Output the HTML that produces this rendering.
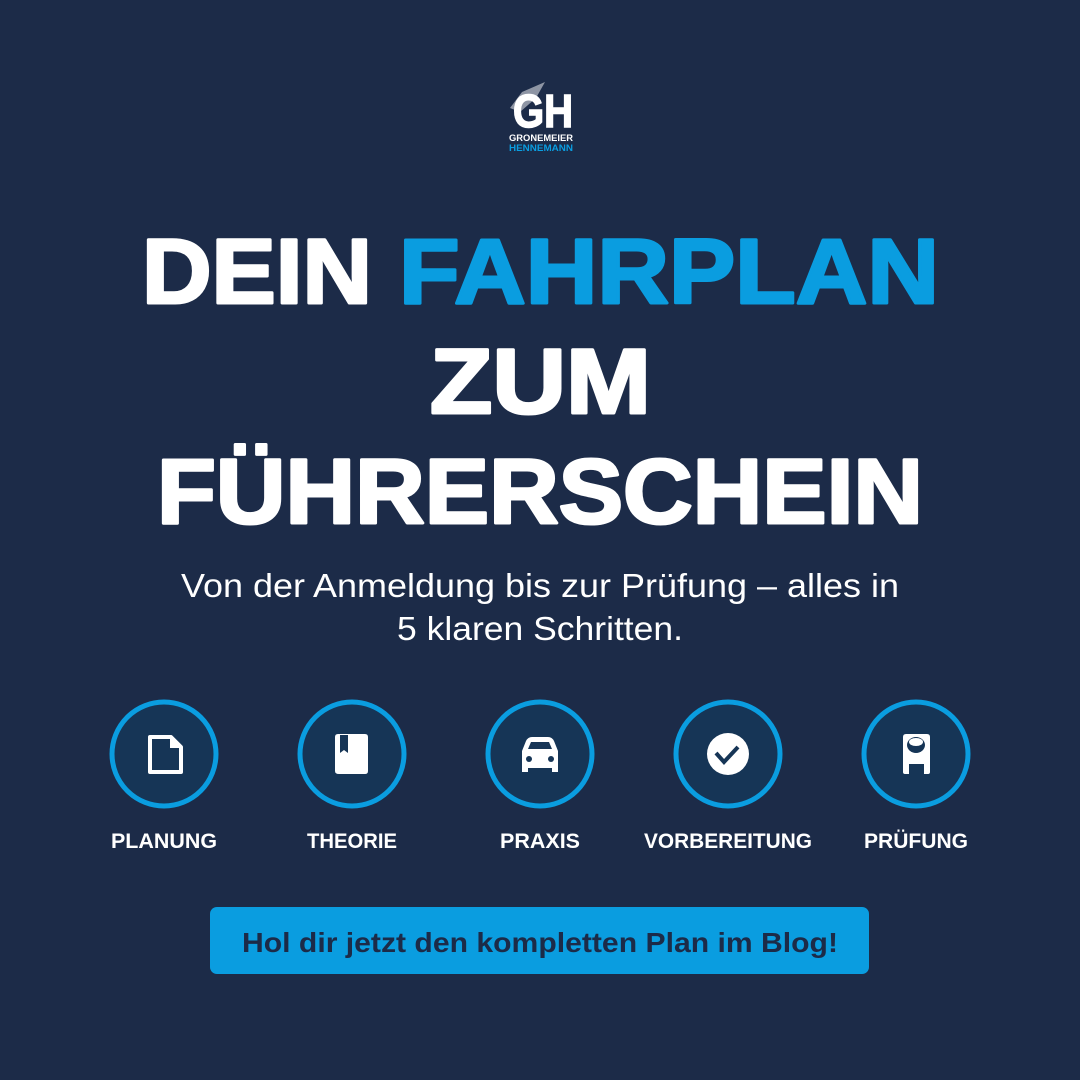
<!DOCTYPE html>
<html><head><meta charset="utf-8"><style>
html,body{margin:0;padding:0;background:#1c2b48;}
svg{display:block}
</style></head><body>
<svg width="1080" height="1080" viewBox="0 0 1080 1080" xmlns="http://www.w3.org/2000/svg">
<rect width="1080" height="1080" fill="#1c2b48"/>
<!-- logo -->
<g>
  <path d="M510 108 L522 92 L545 82 L536 98 L520 112 Z" fill="#ffffff" opacity="0.5"/>
  <text x="543" y="127" font-family="Liberation Sans, sans-serif" font-weight="700" font-size="46" fill="#fff" text-anchor="middle" textLength="60" lengthAdjust="spacingAndGlyphs" stroke="#fff" stroke-width="1.5">GH</text>
  <text x="541" y="141" font-family="Liberation Sans, sans-serif" font-weight="700" font-size="9" fill="#fff" text-anchor="middle" textLength="64" lengthAdjust="spacingAndGlyphs">GRONEMEIER</text>
  <text x="541" y="151" font-family="Liberation Sans, sans-serif" font-weight="700" font-size="9" fill="#0a9de0" text-anchor="middle" textLength="64" lengthAdjust="spacingAndGlyphs">HENNEMANN</text>
</g>
<!-- headline -->
<g font-family="Liberation Sans, sans-serif" font-weight="700" font-size="92" stroke-width="3" stroke-linejoin="round">
  <text x="142" y="303" fill="#fff" stroke="#fff" textLength="230" lengthAdjust="spacingAndGlyphs">DEIN</text>
  <text x="399" y="303" fill="#0a9de0" stroke="#0a9de0" textLength="540" lengthAdjust="spacingAndGlyphs">FAHRPLAN</text>
  <text x="430" y="413" fill="#fff" stroke="#fff" textLength="221" lengthAdjust="spacingAndGlyphs">ZUM</text>
  <text x="157" y="523" fill="#fff" stroke="#fff" textLength="766" lengthAdjust="spacingAndGlyphs">FÜHRERSCHEIN</text>
</g>
<!-- subtitle -->
<g font-family="Liberation Sans, sans-serif" font-size="33" fill="#fff">
  <text x="181" y="597" textLength="718" lengthAdjust="spacingAndGlyphs">Von der Anmeldung bis zur Prüfung – alles in</text>
  <text x="397" y="640" textLength="286" lengthAdjust="spacingAndGlyphs">5 klaren Schritten.</text>
</g>
<!-- circles -->
<g fill="#163556" stroke="#0a9de0" stroke-width="5">
  <circle cx="164" cy="754" r="52"/>
  <circle cx="352" cy="754" r="52"/>
  <circle cx="540" cy="754" r="52"/>
  <circle cx="728" cy="754" r="52"/>
  <circle cx="916" cy="754" r="52"/>
</g>
<!-- icons -->
<path d="M150 737 H171 L181 747 V772 H150 Z" fill="none" stroke="#fff" stroke-width="4" stroke-linejoin="round"/>
<path d="M170 737 V748 H181" fill="#fff"/>
<path d="M337 734 H365 Q368 734 368 737 V771 Q368 774 365 774 H339 Q335 774 335 771 V737 Q335 734 338 734 Z" fill="#fff"/>
<path d="M340 735 V753 L344 750 L348 753 V735 Z" fill="#163556"/>
<path d="M526 741 Q528 737 532 737 H548 Q552 737 554 741 L558 751 V772 H552 V768 H528 V772 H522 V751 Z" fill="#fff"/>
<path d="M528 749 L531 742 H549 L552 749 Z" fill="#163556"/>
<circle cx="529" cy="759" r="3" fill="#163556"/><circle cx="551" cy="759" r="3" fill="#163556"/>
<circle cx="728" cy="754" r="21" fill="#fff"/>
<path d="M716 753 L724 762 L738 747" fill="none" stroke="#163556" stroke-width="4"/>
<path d="M903 737 Q903 734 906 734 H927 Q930 734 930 737 V772 Q930 774 928 774 H924 V764 H909 V774 H905 Q903 774 903 772 Z" fill="#fff"/>
<ellipse cx="916" cy="745" rx="9" ry="8" fill="#163556"/>
<ellipse cx="916" cy="742" rx="7" ry="4" fill="#fff"/>
<!-- labels -->
<g font-family="Liberation Sans, sans-serif" font-weight="700" font-size="21" fill="#fff" text-anchor="middle">
  <text x="164" y="848" textLength="106" lengthAdjust="spacingAndGlyphs">PLANUNG</text>
  <text x="352" y="848" textLength="90" lengthAdjust="spacingAndGlyphs">THEORIE</text>
  <text x="540" y="848" textLength="80" lengthAdjust="spacingAndGlyphs">PRAXIS</text>
  <text x="728" y="848" textLength="168" lengthAdjust="spacingAndGlyphs">VORBEREITUNG</text>
  <text x="916" y="848" textLength="104" lengthAdjust="spacingAndGlyphs">PRÜFUNG</text>
</g>
<!-- button -->
<rect x="210" y="907" width="659" height="67" rx="7" fill="#0a9de0"/>
<text x="242" y="952" font-family="Liberation Sans, sans-serif" font-weight="700" font-size="28" fill="#1c2b48" textLength="596" lengthAdjust="spacingAndGlyphs">Hol dir jetzt den kompletten Plan im Blog!</text>
</svg>
</body></html>
